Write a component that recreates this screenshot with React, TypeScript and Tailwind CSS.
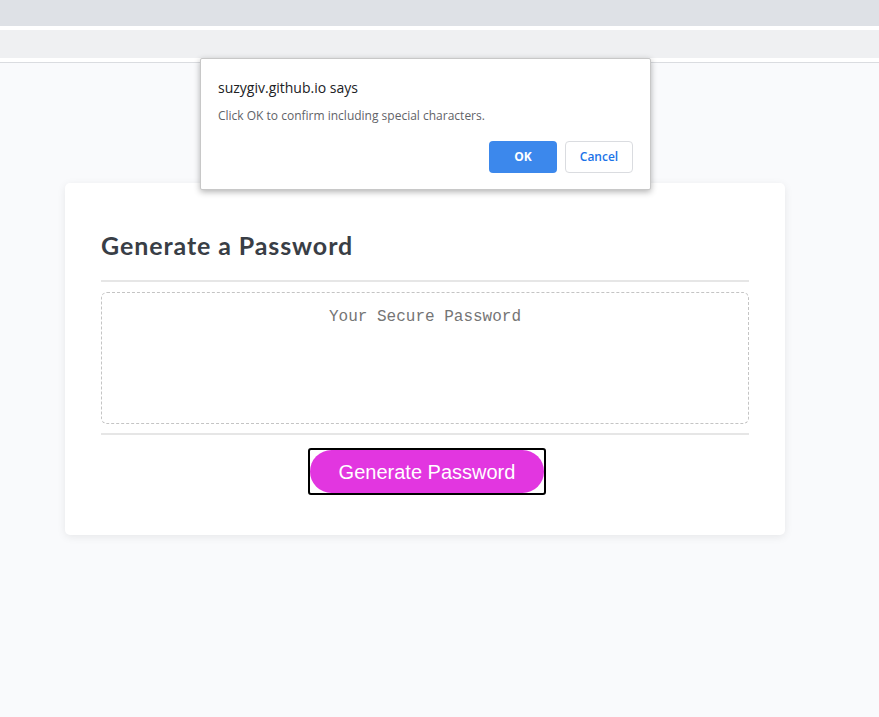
export default function App() {
  return (
    <div className="relative min-h-screen bg-[#f9fafc] font-['Open_Sans',sans-serif]">
      {/* browser chrome strips */}
      <div className="h-[26px] bg-[#dee1e6]" />
      <div className="h-[4px] bg-white" />
      <div className="h-[28px] bg-[#eff0f2]" />
      <div className="h-[4px] bg-white" />
      <div className="h-px bg-[#dadce0]" />

      {/* card */}
      <div className="ml-[65px] mt-[120px] w-[720px] rounded-[5px] bg-white px-[36px] pt-[46px] pb-[40px] shadow-[0_2px_8px_rgba(0,0,0,0.08)]">
        <h2 className="text-[25px] leading-[32px] font-bold tracking-[0.9px] text-[#393e46] font-['Lato',sans-serif]">
          Generate a Password
        </h2>
        <div className="mt-[19px] h-[2px] bg-[#e6e6e6]" />
        <div className="mt-[10px] h-[132px] rounded-[6px] border border-dashed border-[#c4c4c4] pt-[14px] text-center font-['Liberation_Mono',monospace] text-[16px] leading-[20px] text-[#757575]">
          Your Secure Password
        </div>
        <div className="mt-[9px] h-[2px] bg-[#e6e6e6]" />
        <div className="mt-[13px] flex justify-center pl-[4px]">
          <div className="rounded-[3px] border-2 border-black">
            <button className="block h-[43px] w-[234px] rounded-full bg-[#e236e0] font-['Liberation_Sans',sans-serif] text-[20px] text-white">
              Generate Password
            </button>
          </div>
        </div>
      </div>

      {/* alert dialog */}
      <div className="absolute left-[200px] top-[58px] h-[132px] w-[451px] rounded-[2px] border border-[#c8c8c8] bg-white px-[17px] pt-[19px] shadow-[0_2px_6px_rgba(0,0,0,0.3)]">
        <div className="text-[14px] leading-[20px] text-[#202124]">suzygiv.github.io says</div>
        <div className="mt-[10px] text-[12px] leading-[16px] text-[#5f6368]">
          Click OK to confirm including special characters.
        </div>
        <div className="mt-[17px] flex justify-end gap-[8px]">
          <button className="h-[32px] w-[68px] rounded-[4px] bg-[#3c88ec] text-[12px] font-bold text-white">
            OK
          </button>
          <button className="h-[32px] w-[68px] rounded-[4px] border border-[#dadce0] bg-white text-[12px] font-semibold text-[#1a73e8]">
            Cancel
          </button>
        </div>
      </div>
    </div>
  );
}
